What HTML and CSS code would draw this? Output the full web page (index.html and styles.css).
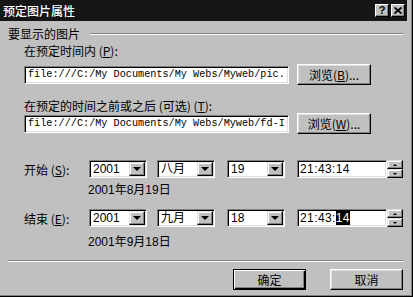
FILE: index.html
```html
<!DOCTYPE html>
<html lang="zh-CN">
<head>
    <meta charset="UTF-8">
    <title>预定图片属性</title>
    <link rel="stylesheet" href="styles.css">
</head>
<body>
    <div class="window">
        <!-- Title bar -->
        <div class="titlebar">
            <span class="title">预定图片属性</span>
            <div class="tb-buttons">
                <span class="tb-btn">?</span>
                <span class="tb-btn">
                    <svg width="8" height="7" viewBox="0 0 8 7"><path d="M0.5 0.5 L7.5 6.5 M7.5 0.5 L0.5 6.5" stroke="#000" stroke-width="1.8"/></svg>
                </span>
            </div>
        </div>

        <div class="content">
            <!-- Group: picture to show -->
            <div class="group-head">
                <span>要显示的图片</span>
                <div class="etched"></div>
            </div>

            <div class="label label-first">在预定时间内 (<u>P</u>):</div>
            <div class="file-row">
                <div class="field sunken">file:///C:/My Documents/My Webs/Myweb/pic.</div>
                <button class="btn browse">浏览(<u>B</u>)...</button>
            </div>

            <div class="label label-second">在预定的时间之前或之后 (可选) (<u>T</u>):</div>
            <div class="file-row file-row-second">
                <div class="field sunken">file:///C:/My Documents/My Webs/Myweb/fd-I</div>
                <button class="btn browse">浏览(<u>W</u>)...</button>
            </div>

            <!-- Start -->
            <div class="date-row date-row-start">
                <span class="date-label">开始 (<u>S</u>):</span>
                <div class="combo sunken"><span class="combo-text">2001</span><span class="drop"><i class="tri"></i></span></div>
                <div class="combo sunken combo-month"><span class="combo-text">八月</span><span class="drop"><i class="tri"></i></span></div>
                <div class="combo sunken combo-day"><span class="combo-text">19</span><span class="drop"><i class="tri"></i></span></div>
                <div class="time">
                    <div class="time-field sunken">21:43:14</div>
                    <div class="spin">
                        <span class="spin-btn"><i class="tri-up"></i></span>
                        <span class="spin-btn"><i class="tri-small"></i></span>
                    </div>
                </div>
            </div>
            <div class="date-text date-text-start">2001年8月19日</div>

            <!-- End -->
            <div class="date-row date-row-end">
                <span class="date-label">结束 (<u>E</u>):</span>
                <div class="combo sunken"><span class="combo-text">2001</span><span class="drop"><i class="tri"></i></span></div>
                <div class="combo sunken combo-month"><span class="combo-text">九月</span><span class="drop"><i class="tri"></i></span></div>
                <div class="combo sunken combo-day"><span class="combo-text">18</span><span class="drop"><i class="tri"></i></span></div>
                <div class="time">
                    <div class="time-field sunken">21:43:<span class="sel">14</span></div>
                    <div class="spin">
                        <span class="spin-btn"><i class="tri-up"></i></span>
                        <span class="spin-btn"><i class="tri-small"></i></span>
                    </div>
                </div>
            </div>
            <div class="date-text date-text-end">2001年9月18日</div>

            <div class="sep"></div>

            <!-- Dialog buttons -->
            <div class="actions">
                <button class="btn btn-default">确定</button>
                <button class="btn">取消</button>
            </div>
        </div>
    </div>
</body>
</html>
```

FILE: styles.css
```css
body {
    margin: 0;
    background-color: #c0c0c0;
    font-family: "Noto Sans CJK SC", sans-serif;
    font-size: 12px;
    color: #000;
}

.window {
    width: 413px;
    height: 297px;
    box-sizing: border-box;
    padding-right: 5px;
    border-right: 1px solid #000;
    border-bottom: 1px solid #000;
    box-shadow: inset -1px -1px #808080;
    background-color: #c0c0c0;
    overflow: hidden;
}

/* Title bar */
.titlebar {
    height: 21px;
    background-color: #161616;
    display: flex;
    align-items: center;
    justify-content: space-between;
    padding: 0 2px 0 3px;
}

.title {
    color: #fff;
    font-size: 12px;
    font-weight: 500;
    line-height: 21px;
}

.tb-buttons {
    display: flex;
    gap: 2px;
}

.tb-btn {
    width: 14px;
    height: 13px;
    box-sizing: border-box;
    background-color: #c0c0c0;
    border: 1px solid;
    border-color: #fff #000 #000 #fff;
    box-shadow: inset -1px -1px #808080;
    display: flex;
    align-items: center;
    justify-content: center;
    font: bold 11px "Liberation Sans", sans-serif;
    line-height: 11px;
}

/* Content */
.content {
    padding: 0 4px 0 8px;
}

.group-head {
    margin-top: 6px;
    height: 13px;
    line-height: 13px;
    display: flex;
    align-items: center;
}

.etched {
    flex: 1;
    margin-left: 10px;
    height: 0;
    border-top: 1px solid #808080;
    border-bottom: 1px solid #fff;
}

.label {
    margin-left: 16px;
    height: 13px;
    line-height: 13px;
}

.label-first {
    margin-top: 4px;
}

.label-second {
    margin-top: 14px;
}

.file-row {
    margin-top: 7px;
    margin-left: 16px;
    height: 21px;
    display: flex;
    align-items: center;
}

.file-row-second {
    margin-top: 1px;
}

.sunken {
    box-sizing: border-box;
    background-color: #fff;
    border: 1px solid;
    border-color: #808080 #fff #fff #808080;
    box-shadow: inset 1px 1px #000, inset -1px -1px #dfdfdf;
}

.field {
    width: 265px;
    height: 18px;
    padding: 0 0 0 3px;
    font-family: "Liberation Mono", monospace;
    font-size: 10.2px;
    line-height: 16px;
    white-space: nowrap;
    overflow: hidden;
}

.btn {
    box-sizing: border-box;
    height: 21px;
    padding: 0;
    font-family: "Noto Sans CJK SC", sans-serif;
    font-size: 12px;
    line-height: 17px;
    color: #000;
    background-color: #c0c0c0;
    border: 1px solid;
    border-color: #fff #000 #000 #fff;
    box-shadow: inset -1px -1px #808080, inset 1px 1px #dfdfdf;
}

.browse {
    width: 74px;
    margin-left: 8px;
}

/* Date rows */
.date-row {
    height: 18px;
    display: flex;
    align-items: center;
    margin-left: 16px;
}

.date-row-start {
    margin-top: 26px;
}

.date-row-end {
    margin-top: 12px;
}

.date-label {
    width: 65px;
    line-height: 13px;
}

.combo {
    width: 58px;
    height: 18px;
    padding: 1px;
    display: flex;
    align-items: center;
}

.combo-month {
    margin-left: 10px;
}

.combo-day {
    margin-left: 12px;
}

.combo-text {
    flex: 1;
    padding-left: 2px;
    font-family: "Liberation Sans", "Noto Sans CJK SC", sans-serif;
    font-size: 12px;
    line-height: 14px;
}

.drop {
    box-sizing: border-box;
    width: 16px;
    height: 14px;
    background-color: #c0c0c0;
    border: 1px solid;
    border-color: #dfdfdf #000 #000 #dfdfdf;
    box-shadow: inset -1px -1px #808080, inset 1px 1px #fff;
    display: flex;
    align-items: center;
    justify-content: center;
}

.tri {
    width: 0;
    height: 0;
    border-left: 4px solid transparent;
    border-right: 4px solid transparent;
    border-top: 4px solid #000;
}

.time {
    margin-left: 12px;
    display: flex;
    height: 18px;
}

.time-field {
    width: 90px;
    height: 18px;
    padding-left: 2px;
    font-family: "Liberation Sans", sans-serif;
    font-size: 12px;
    letter-spacing: 0.4px;
    line-height: 16px;
}

.sel {
    background-color: #000;
    color: #fff;
}

.spin {
    width: 16px;
    display: flex;
    flex-direction: column;
}

.spin-btn {
    box-sizing: border-box;
    height: 9px;
    background-color: #c0c0c0;
    border: 1px solid;
    border-color: #dfdfdf #000 #000 #dfdfdf;
    box-shadow: inset -1px -1px #808080, inset 1px 1px #fff;
    display: flex;
    align-items: center;
    justify-content: center;
}

.tri-up {
    width: 0;
    height: 0;
    border-left: 2px solid transparent;
    border-right: 2px solid transparent;
    border-bottom: 2px solid #000;
}

.tri-small {
    width: 0;
    height: 0;
    border-left: 2px solid transparent;
    border-right: 2px solid transparent;
    border-top: 2px solid #000;
}

.date-text {
    margin-left: 80px;
    height: 13px;
    line-height: 13px;
    font-family: "Liberation Sans", "Noto Sans CJK SC", sans-serif;
}

.date-text-start {
    margin-top: 6px;
}

.date-text-end {
    margin-top: 9px;
}

.sep {
    margin-top: 11px;
    height: 0;
    border-top: 1px solid #808080;
    border-bottom: 1px solid #fff;
}

.actions {
    margin-top: 7px;
    display: flex;
    justify-content: flex-end;
    gap: 24px;
}

.actions .btn {
    width: 73px;
}

.btn-default {
    border-color: #000;
    box-shadow: inset 1px 1px #fff, inset -1px -1px #000, inset -2px -2px #808080;
}
```
